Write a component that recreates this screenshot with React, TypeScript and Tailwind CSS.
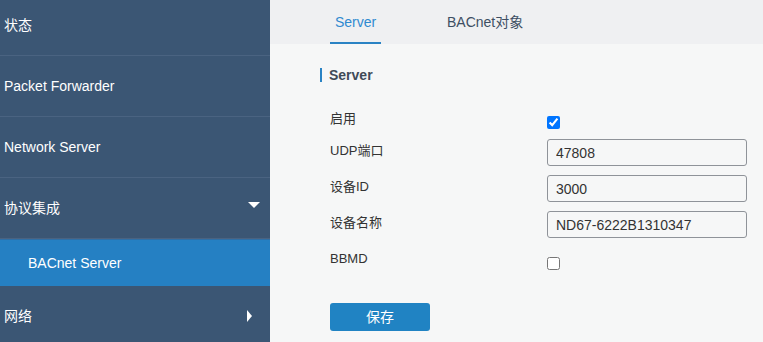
import React from "react";

const font = { fontFamily: '"Liberation Sans", Arial, "Noto Sans CJK SC", sans-serif' };

function NavRow({ label, h, arrow, first }: { label: string; h: string; arrow?: "down" | "right"; first?: boolean }) {
  return (
    <div className={`${h} ${first ? "pb-[5px]" : ""} flex shrink-0 items-center justify-between border-b border-[#4a6381] pl-[4px] pr-[10px] text-[14px] text-white`}>
      <span>{label}</span>
      {arrow === "down" && (
        <svg width="12" height="6" viewBox="0 0 12 6" className="mb-[7px] mr-[0px]">
          <polygon points="0,0 12,0 6,6" fill="#ffffff" />
        </svg>
      )}
      {arrow === "right" && (
        <svg width="5" height="12" viewBox="0 0 5 12" className="mr-[8px]">
          <polygon points="0,0 5,6 0,12" fill="#ffffff" />
        </svg>
      )}
    </div>
  );
}

function Field({ label, value }: { label: string; value: string }) {
  return (
    <div className="flex h-[36px] items-start">
      <div className="w-[217px] text-[13px] leading-[23px] text-[#333]">{label}</div>
      <input
        readOnly
        value={value}
        className="h-[27px] w-[200px] rounded-[3px] border border-[#8f9399] bg-[#f6f7f7] pl-[8px] text-[14px] text-[#333] outline-none"
        style={font}
      />
    </div>
  );
}

export default function App() {
  return (
    <div className="flex h-[342px] w-[763px] overflow-hidden" style={font}>
      <div className="flex w-[270px] shrink-0 flex-col bg-[#3b5674]">
        <NavRow label="状态" h="h-[56px]" first />
        <NavRow label="Packet Forwarder" h="h-[61px]" />
        <NavRow label="Network Server" h="h-[61px]" />
        <NavRow label="协议集成" h="h-[61px]" arrow="down" />
        <div className="flex h-[47px] shrink-0 items-center border-t border-[#2f6fa6] bg-[#2580c3] pl-[28px] text-[14px] text-white">
          BACnet Server
        </div>
        <NavRow label="网络" h="h-[61px]" arrow="right" />
      </div>
      <div className="flex flex-1 flex-col bg-[#f6f7f7]">
        <div className="flex h-[44px] shrink-0 items-stretch bg-[#eff0f2] pl-[60px] text-[14px]">
          <div className="flex w-[51px] items-center justify-center border-b-2 border-[#2a83c4] pt-[2px] text-[#2f8ad0]">
            Server
          </div>
          <div className="ml-[66px] flex items-center text-[#3d4f63]">BACnet对象</div>
        </div>
        <div className="pl-[50px]">
          <div className="mt-[24px] flex h-[14px] items-center">
            <div className="h-[14px] w-[2px] bg-[#2a83c4]" />
            <div className="ml-[7px] text-[14px] font-bold text-[#3f4a57]">Server</div>
          </div>
          <div className="mt-[21px] pl-[10px]">
            <div className="flex h-[36px] items-start">
              <div className="w-[217px] pt-[4px] text-[13px] leading-[23px] text-[#333]">启用</div>
              <input type="checkbox" defaultChecked className="m-0 mt-[13px] h-[13px] w-[13px]" />
            </div>
            <Field label="UDP端口" value="47808" />
            <Field label="设备ID" value="3000" />
            <Field label="设备名称" value="ND67-6222B1310347" />
            <div className="flex h-[36px] items-start">
              <div className="w-[217px] text-[13px] leading-[23px] text-[#333]">BBMD</div>
              <input type="checkbox" className="m-0 mt-[10px] h-[13px] w-[13px]" />
            </div>
            <button className="mt-[20px] flex h-[28px] w-[100px] items-center justify-center rounded-[3px] bg-[#2083c3] text-[14px] text-white">
              保存
            </button>
          </div>
        </div>
      </div>
    </div>
  );
}
